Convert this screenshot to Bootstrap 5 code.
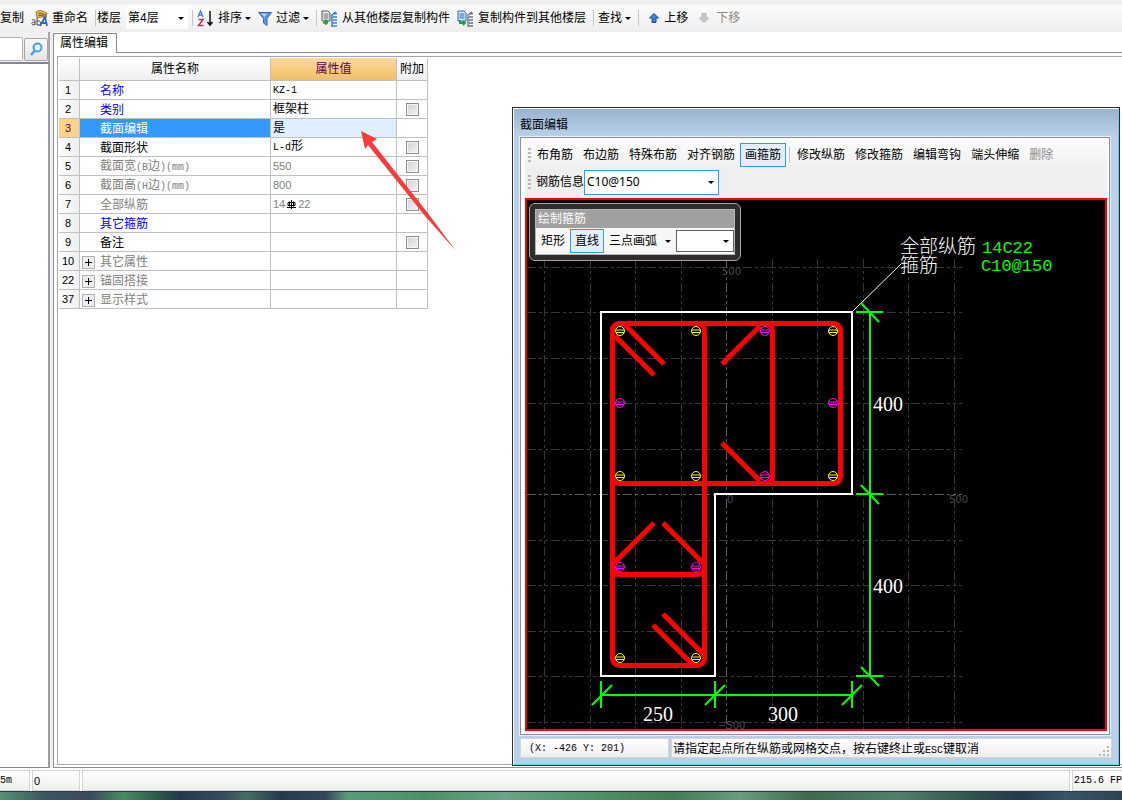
<!DOCTYPE html>
<html lang="zh-CN">
<head>
<meta charset="utf-8">
<meta name="viewport" content="width=device-width, initial-scale=1">
<title>属性编辑</title>
<link href="https://cdn.jsdelivr.net/npm/bootstrap@5.3.0/dist/css/bootstrap.min.css" rel="stylesheet">
<script src="https://cdn.jsdelivr.net/npm/bootstrap@5.3.0/dist/js/bootstrap.bundle.min.js"></script>
<style>
  :root { --line: #c0c0c0; --edge: #8c8e97; --hot: #3399ff; --hot-bg: #e4effb; }
  body { font: 12px/16px "Liberation Sans", "Noto Sans CJK SC", sans-serif; color: #000; background: #fff; }
  button, select, input { font: inherit; color: inherit; }
  .lat { font-family: "Liberation Mono", monospace; font-size: 10px; }
  .num { font-size: 11px; }

  /* toolbars */
  .toolstrip { height: 32px; padding-top: 4px; gap: 1px; background: linear-gradient(#f0f0f0 4px, #fcfcfc 5px, #eeeeee); }
  .tool { display: inline-flex; align-items: center; gap: 4px; padding: 0 3px; height: 24px; border: 0; background: transparent; white-space: nowrap; }
  .tool:disabled { color: #8a8a8a; }
  .tool svg { width: 17px; height: 17px; flex: none; }
  .tool .slim { width: 14px; }
  .caret { width: 0; height: 0; margin-left: -1px; border: 3px solid transparent; border-top-color: #000; border-bottom: 0; flex: none; }
  .divider { width: 1px; height: 16px; margin-left: 3px; background: #c4c4c4; flex: none; }
  .pick { appearance: none; border: 0; border-radius: 0; outline: 0; padding: 0 14px 0 2px; background: #fff url("data:image/svg+xml,%3Csvg xmlns='http://www.w3.org/2000/svg' width='6' height='3'%3E%3Cpath d='M0 0h6L3 3z'/%3E%3C/svg%3E") no-repeat right 4px center; }
  .floor { width: 62px; height: 22px; }

  /* left list and property pane */
  .sidebar { width: 53px; background: #f0f0f0; }
  .finder { height: 30px; padding-top: 5px; border-right: 2px solid #a9a9a9; width: 50px; }
  .finder input { min-width: 0; height: 24px; border: 1px solid #b4b4b4; border-left: 0; border-radius: 0 2px 2px 0; }
  .finder button { width: 24px; height: 23px; margin: 1px 0 0 1px; padding: 0; border: 1px solid #a6a6a6; border-radius: 2px; background: linear-gradient(#f8f8f8, #e6e6e6); flex: none; }
  .tree { width: 50px; border: 2px solid #84868d; border-left: 0; border-right-color: #9b9da3; border-bottom-width: 1px; background: #fff; }
  .tabs { height: 21px; }
  .tab-on { width: 64px; margin-top: 1px; border: 1px solid var(--edge); border-bottom: 0; padding: 0 0 2px 6px; background: #fff; text-align: left; line-height: 14px; }
  .tab-rest { border-bottom: 1px solid var(--edge); }
  .pane { border: 1px solid var(--edge); border-top: 0; border-right: 0; padding: 3px 0 2px 3px; }
  .pane-in { border: 1px solid #a5a7ad; border-right: 0; padding: 1px; }

  .props { table-layout: fixed; width: 369px; border-spacing: 0; border-collapse: separate; }
  .props th, .props td { height: 19px; padding: 0; border: solid var(--line); border-width: 0 1px 1px 0; font-weight: normal; line-height: 16px; white-space: nowrap; overflow: hidden; }
  .props thead th { height: 23px; text-align: center; background: linear-gradient(#fff, #efefef); }
  .props thead th.sel { background: linear-gradient(#fad9a0, #f1c063); color: #5c005c; }
  .props tbody th { text-align: center; font-size: 11px; padding-right: 2px; background: linear-gradient(90deg, #fcfcfc, #efefef); }
  .props .nm { padding: 2px 0 0 20px; color: #808080; line-height: 14px; }
  .props .k { color: #000; }
  .props .b { color: #00f; }
  .props .vl { padding-left: 2px; }
  .props .gr { color: #808080; }
  .props .cur th { background: #ffd28c; color: #5c005c; }
  .props .cur .nm { background: var(--hot); color: #fff; }
  .props .cur .vl { background: #dfeffe; }
  .props .ck { text-align: center; line-height: 0; }
  .props input { appearance: none; width: 13px; height: 13px; margin: 1px 0 0; border: 1px solid #8e8f8f; outline: 1px solid #f4f4f4; outline-offset: -2px; background: linear-gradient(135deg, #cdd0d6, #f6f6f6); }
  .plus { width: 13px; height: 13px; padding: 0; border: 1px solid #b0b0b0; background: #eceef2; margin: 0 5px 0 -18px; line-height: 0; vertical-align: -2px; }
  .plus svg { display: block; }

  /* status bar and desktop edge */
  .status { height: 24px; padding-top: 2px; gap: 2px; background: #fff; border-bottom: 1px solid #2c3e46; }
  .cell { border: 1px solid #d4d4d4; background: linear-gradient(#fff, #efefef); padding: 2px 1px; white-space: nowrap; overflow: hidden; }
  .desk { height: 8px; background: linear-gradient(90deg, #569072 0, #3d5560 4%, #3c4a5c 8%, #4b8a62 11%, #2f5a4c 14%, #24384a 16%, #3c4b5e 20%, #476c62 22%, #28394b 25%, #33475a 29%, #5b9a7b 31%, #4f8f66 38%, #6ba487 45%, #54926a 52%, #437c55 60%, #6a9c80 66%, #40694f 72%, #517f68 80%, #31504c 87%, #24384a 91%, #395468 95%, #2e4450); }

  /* floating section window */
  .win { right: 2px; top: 107px; width: 608px; border: 1px solid #2a2d33; background: #b9d0ea; box-shadow: inset 1px 1px 0 #fff, inset -1px -1px 0 #59d3ee; padding: 1px 7px 7px; }
  .win-title { height: 27px; margin: 0 -6px; padding: 8px 6px 0; background: linear-gradient(#99b3d0, #b9d0ea); }
  .win-body { border: 1px solid var(--edge); outline: 1px solid #e6eef7; background: #fff; padding: 3px 2px 3px 4px; margin: 1px 2px 0 0; }
  .bars { background: linear-gradient(#fcfcfc, #efefef 28px); padding: 0 0 0 3px; height: 57px; }
  .bars .tool, .palette .tool { border: 1px solid transparent; padding: 0 4px; }
  .bars .tool.on, .palette .tool.on { border-color: var(--hot); background: var(--hot-bg); }
  .grip { width: 3px; height: 14px; margin-right: 1px; background: repeating-linear-gradient(#b8b8b8 0 2px, transparent 2px 4px); flex: none; }
  .bars .divider { margin: 0 2px 0 3px; }
  .spec { width: 135px; height: 25px; border: 1px solid var(--hot); font-family: "Noto Sans", sans-serif; }
  .stage { background: #000; border: 2px solid #f00; }
  .stage svg { width: 100%; }
  .win-status { height: 20px; margin-top: 3px; gap: 2px; }
  .palette { left: 2px; top: 3px; width: 212px; border: 1px solid #a9a4a4; border-radius: 6px; background: #302c2e; padding: 5px; }
  .palette-in { border: 1px solid #b5b5b5; background: #f6f6f6; }
  .palette-head { height: 18px; background: #a0a0a0; color: #fff; padding: 1px 2px; }
  .palette-row { height: 26px; }
  .arc { width: 58px; height: 22px; border: 1px solid #606060; opacity: .8; }
  .pointer { left: 355px; top: 125px; width: 106px; height: 130px; pointer-events: none; }
</style>
</head>
<body class="d-flex flex-column vh-100 overflow-hidden position-relative">

<header class="toolstrip d-flex align-items-center overflow-hidden" role="toolbar">
  <button class="tool ps-0">复制</button>
  <button class="tool"><svg viewBox="0 0 17 17"><path d="M5 2l4-2 7 3-1 5-4-1-5 1z" fill="#e9b63c" stroke="#8a6a24" stroke-width=".8"/><path d="M8 3l7 2M7 5l6 1" stroke="#4c6652"/><path d="M1 10c2-1 3 0 3 1v4M4 12c-4 0-4 3-1 3l1-1M6 8v7h2c2 0 2-4 0-4H6" fill="none" stroke="#444"/><path d="M9 16l5-9 2 9M11 13h4" fill="none" stroke="#2f66c4" stroke-width="1.8"/></svg>重命名</button>
  <span class="divider"></span>
  <label for="floor" class="text-nowrap pe-1">楼层</label>
  <select id="floor" class="pick floor"><option>第4层</option></select>
  <span class="divider"></span>
  <button class="tool"><svg viewBox="0 0 17 17"><path d="M1 7l2.500-6 2.500 6M2 5h3" fill="none" stroke="#4d7fc0" stroke-width="1.400"/><path d="M1.500 9.500H6L1.500 15.500H6.500" fill="none" stroke="#a8414e" stroke-width="1.500"/><path d="M13 1v14M10.500 12l2.500 3 2.500-3" fill="none" stroke="#111" stroke-width="1.500"/></svg>排序<span class="caret"></span></button>
  <button class="tool"><svg class="slim" viewBox="0 0 14 17"><path d="M.500 2.500h13L9 8.500v7L5.500 13V8.500z" fill="#5f94e4" stroke="#3166b8"/><path d="M3 3.500h6L6.500 7z" fill="#b9d5fa"/></svg>过滤<span class="caret"></span></button>
  <span class="divider"></span>
  <button class="tool"><svg viewBox="0 0 17 17"><path d="M1 1h6l2 2v8H1z" fill="#eee" stroke="#555"/><path d="M2.500 4h5M2.500 6h5M2.500 8h5" stroke="#666"/><path d="M2 13h5M5 10v5M3 12l2-2 2 2" stroke="#1f9c3c" stroke-width="1.500" fill="none"/><path d="M11 4v13M15 2l-3 2 4-.500M12 7h4M12 10h4M12 13h4M12 16h4" stroke="#3c80d2" stroke-width="1.600" fill="none"/></svg>从其他楼层复制构件</button>
  <button class="tool"><svg viewBox="0 0 17 17"><path d="M1 1h6l2 2v8H1z" fill="#dceafd" stroke="#2f64bd"/><path d="M2.500 4h5M2.500 6h5M2.500 8h5" stroke="#2f64bd"/><path d="M3 10v3h5M6 11l2 2-2 2" stroke="#1f9c3c" stroke-width="1.800" fill="none"/><path d="M11 4v13M15 2l-3 2 4-.500M12 7h4M12 10h4M12 13h4M12 16h4" stroke="#66727f" stroke-width="1.400" fill="none"/></svg>复制构件到其他楼层</button>
  <span class="divider"></span>
  <button class="tool">查找<span class="caret"></span></button>
  <span class="divider"></span>
  <button class="tool"><svg viewBox="0 0 17 17"><path d="M11 3.500l4.500 4.500H13v4.500H9V8H6.500z" fill="#3f7de0" stroke="#1c479c"/></svg>上移</button>
  <button class="tool" disabled><svg viewBox="0 0 17 17"><path d="M9 12.500L4.500 8H7V3.500h4V8h2.500z" fill="#c9c9c9" stroke="#b5b5b5"/></svg>下移</button>
</header>

<main class="d-flex flex-grow-1" style="min-height:0">
  <aside class="sidebar d-flex flex-column flex-shrink-0">
    <div class="finder d-flex">
      <input type="text" class="flex-fill" aria-label="查找构件">
      <button aria-label="搜索"><svg width="22" height="21" viewBox="0 0 22 21"><circle cx="12.500" cy="8.500" r="4" fill="#e4f2ff" stroke="#4c9ee8" stroke-width="2"/><path d="M9.500 12L6 16" stroke="#4c9ee8" stroke-width="2.600"/></svg></button>
    </div>
    <div class="tree flex-fill"></div>
  </aside>
  <section class="d-flex flex-column flex-fill">
    <div class="tabs d-flex"><button class="tab-on text-nowrap">属性编辑</button><div class="tab-rest flex-fill"></div></div>
    <div class="pane flex-fill d-flex"><div class="pane-in flex-fill">
      <table class="props">
        <colgroup><col style="width:21px"><col style="width:191px"><col style="width:126px"><col style="width:31px"></colgroup>
        <thead><tr><th></th><th>属性名称</th><th class="sel">属性值</th><th>附加</th></tr></thead>
        <tbody>
          <tr><th>1</th><td class="nm b">名称</td><td class="vl"><span class="lat">KZ-1</span></td><td></td></tr>
          <tr><th>2</th><td class="nm b">类别</td><td class="vl">框架柱</td><td class="ck"><input type="checkbox" aria-label="附加 类别"></td></tr>
          <tr class="cur"><th>3</th><td class="nm">截面编辑</td><td class="vl">是</td><td></td></tr>
          <tr><th>4</th><td class="nm k">截面形状</td><td class="vl"><span class="lat">L-d</span>形</td><td class="ck"><input type="checkbox" aria-label="附加 截面形状"></td></tr>
          <tr><th>5</th><td class="nm">截面宽<span class="lat">(B</span>边<span class="lat">)(mm)</span></td><td class="vl gr"><span class="num">550</span></td><td class="ck"><input type="checkbox" aria-label="附加 截面宽"></td></tr>
          <tr><th>6</th><td class="nm">截面高<span class="lat">(H</span>边<span class="lat">)(mm)</span></td><td class="vl gr"><span class="num">800</span></td><td class="ck"><input type="checkbox" aria-label="附加 截面高"></td></tr>
          <tr><th>7</th><td class="nm">全部纵筋</td><td class="vl gr"><span class="num">14</span><svg width="13" height="11" viewBox="0 0 13 11" style="vertical-align:-2px"><path d="M6.500 1v9M2 8.500h9M3 3.500h7v3H3zM4.500 2.500v5M8.500 2.500v5" fill="none" stroke="#000"/></svg><span class="num">22</span></td><td class="ck"><input type="checkbox" aria-label="附加 全部纵筋"></td></tr>
          <tr><th>8</th><td class="nm b">其它箍筋</td><td></td><td></td></tr>
          <tr><th>9</th><td class="nm k">备注</td><td></td><td class="ck"><input type="checkbox" aria-label="附加 备注"></td></tr>
          <tr><th>10</th><td class="nm"><button class="plus" aria-label="展开"><svg width="11" height="11"><path d="M2 5.500h7M5.500 2v7" stroke="#000"/></svg></button>其它属性</td><td></td><td></td></tr>
          <tr><th>22</th><td class="nm"><button class="plus" aria-label="展开"><svg width="11" height="11"><path d="M2 5.500h7M5.500 2v7" stroke="#000"/></svg></button>锚固搭接</td><td></td><td></td></tr>
          <tr><th>37</th><td class="nm"><button class="plus" aria-label="展开"><svg width="11" height="11"><path d="M2 5.500h7M5.500 2v7" stroke="#000"/></svg></button>显示样式</td><td></td><td></td></tr>
        </tbody>
      </table>
    </div></div>
  </section>
</main>

<footer class="status d-flex flex-shrink-0">
  <div class="cell lat ps-0 border-start-0" style="width:30px">5m</div>
  <div class="cell num" style="width:48px">0</div>
  <div class="cell flex-fill"></div>
  <div class="cell lat border-end-0" style="width:50px">215.6 FP</div>
</footer>
<div class="desk flex-shrink-0"></div>

<svg class="pointer position-absolute" viewBox="355 125 106 130" aria-hidden="true"><path d="M361 131l16 8-5 3 55 70 29 39-31-35-57-71-3 4z" fill="#fb3b3b"/></svg>

<section class="win position-absolute" role="dialog" aria-label="截面编辑">
  <div class="win-title">截面编辑</div>
  <div class="win-body">
    <div class="bars">
      <div class="d-flex align-items-center" style="height:27px">
        <span class="grip"></span>
        <button class="tool">布角筋</button><button class="tool">布边筋</button><button class="tool">特殊布筋</button><button class="tool">对齐钢筋</button><button class="tool on">画箍筋</button>
        <span class="divider"></span>
        <button class="tool">修改纵筋</button><button class="tool">修改箍筋</button><button class="tool">编辑弯钩</button><button class="tool">端头伸缩</button><button class="tool" disabled>删除</button>
      </div>
      <div class="d-flex align-items-center" style="height:28px">
        <span class="grip"></span>
        <label for="spec" class="ms-1">钢筋信息</label>
        <select id="spec" class="pick spec"><option>C10@150</option></select>
      </div>
    </div>
    <div class="stage position-relative">
      <svg class="d-block" viewBox="527 200 578 529" font-family="Liberation Serif, Noto Sans CJK SC, serif">
        <g stroke="#363636" stroke-dasharray="9 3 3 3 3 3" fill="none">
          <path d="M544.500 259V729M590.500 259V729M635.500 259V729M681.500 259V729M772.500 259V729M817.500 259V729M863.500 259V729M908.500 259V729M954.500 259V729"/>
          <path d="M527 267.500H962M527 312.500H962M527 358.500H962M527 403.500H962M527 449.500H962M527 540.500H962M527 585.500H962M527 631.500H962M527 676.500H962M527 722.500H962"/>
          <path d="M726.500 259V729M527 494.500H962" stroke="#5c5c5c"/>
        </g>
        <g fill="#4a4a4a" font-family="DejaVu Sans, sans-serif" font-size="10">
          <text x="722" y="275">500</text><text x="727" y="503">0</text><text x="949" y="503">500</text><text x="718" y="729">−500</text>
        </g>
        <path d="M601 312H852V494H715V676H601z" fill="none" stroke="#fff" stroke-width="2"/>
        <path d="M852 312L901 264" stroke="#fff"/>
        <g fill="none" stroke="#f00" stroke-width="5">
          <rect x="612.500" y="323.500" width="92" height="342" rx="7"/>
          <rect x="612.500" y="323.500" width="228" height="160" rx="7"/>
          <path d="M765 323.500q7.500 0 7.500 7V476q0 7.500-7 7.500M613 567q0 7.500 7 7.500H697q7.500 0 7.500-7"/>
          <path d="M615 336L654 375M625 325L664 364M760 326L722 364M722 443L760 481M654 523L614 563M663 523L704 564M663 614L704 655M653 625L692 664"/>
        </g>
        <defs><g id="bar" fill="none"><circle r="4.500"/><path d="M-4.500 -1H4.500M-4 1.500H4"/></g></defs>
        <g stroke="#ff0">
          <use href="#bar" x="620" y="331"/><use href="#bar" x="696" y="331"/><use href="#bar" x="833" y="331"/><use href="#bar" x="620" y="476"/><use href="#bar" x="696" y="476"/><use href="#bar" x="833" y="476"/><use href="#bar" x="620" y="658"/><use href="#bar" x="696" y="658"/>
        </g>
        <g stroke="#f0f">
          <use href="#bar" x="765" y="331"/><use href="#bar" x="620" y="403"/><use href="#bar" x="833" y="403"/><use href="#bar" x="765" y="476"/><use href="#bar" x="620" y="567"/><use href="#bar" x="696" y="567"/>
        </g>
        <g stroke="#0f0" stroke-width="2" fill="none">
          <path d="M870 312V676M856 312H883M856 494H883M856 676H883M861 303L879 322M861 485L879 504M861 667L879 686"/>
          <path d="M601 695H852M601 681V708M715 681V708M852 681V708M592 705L612 685M705 705L725 685M842 705L862 685"/>
        </g>
        <g fill="#fff" font-size="20">
          <text x="873" y="411">400</text><text x="873" y="593">400</text><text x="643" y="721">250</text><text x="768" y="721">300</text>
        </g>
        <g fill="#fff" font-size="19" font-weight="300"><text x="900" y="253">全部纵筋</text><text x="900" y="272">箍筋</text></g>
        <g fill="#0f0" font-family="Liberation Mono, monospace" font-size="17"><text x="982" y="253">14C22</text><text x="981" y="271">C10@150</text></g>
      </svg>
      <div class="palette position-absolute"><div class="palette-in">
        <div class="palette-head">绘制箍筋</div>
        <div class="palette-row d-flex align-items-center">
          <button class="tool">矩形</button><button class="tool on">直线</button><button class="tool">三点画弧<span class="caret ms-1"></span></button>
          <select class="pick arc" aria-label="弧半径" disabled><option></option></select>
        </div>
      </div></div>
    </div>
  </div>
  <div class="win-status d-flex">
    <div class="cell lat ps-2" style="width:149px">(X: -426 Y: 201)</div>
    <div class="cell flex-fill position-relative">请指定起点所在纵筋或网格交点，按右键终止或<span class="lat">ESC</span>键取消
      <svg class="position-absolute bottom-0 end-0" width="12" height="12"><path d="M8 1h2v2H8zM8 5h2v2H8zM8 9h2v2H8zM4 5h2v2H4zM4 9h2v2H4zM0 9h2v2H0z" fill="#b8b8b8"/></svg></div>
  </div>
</section>
</body>
</html>
